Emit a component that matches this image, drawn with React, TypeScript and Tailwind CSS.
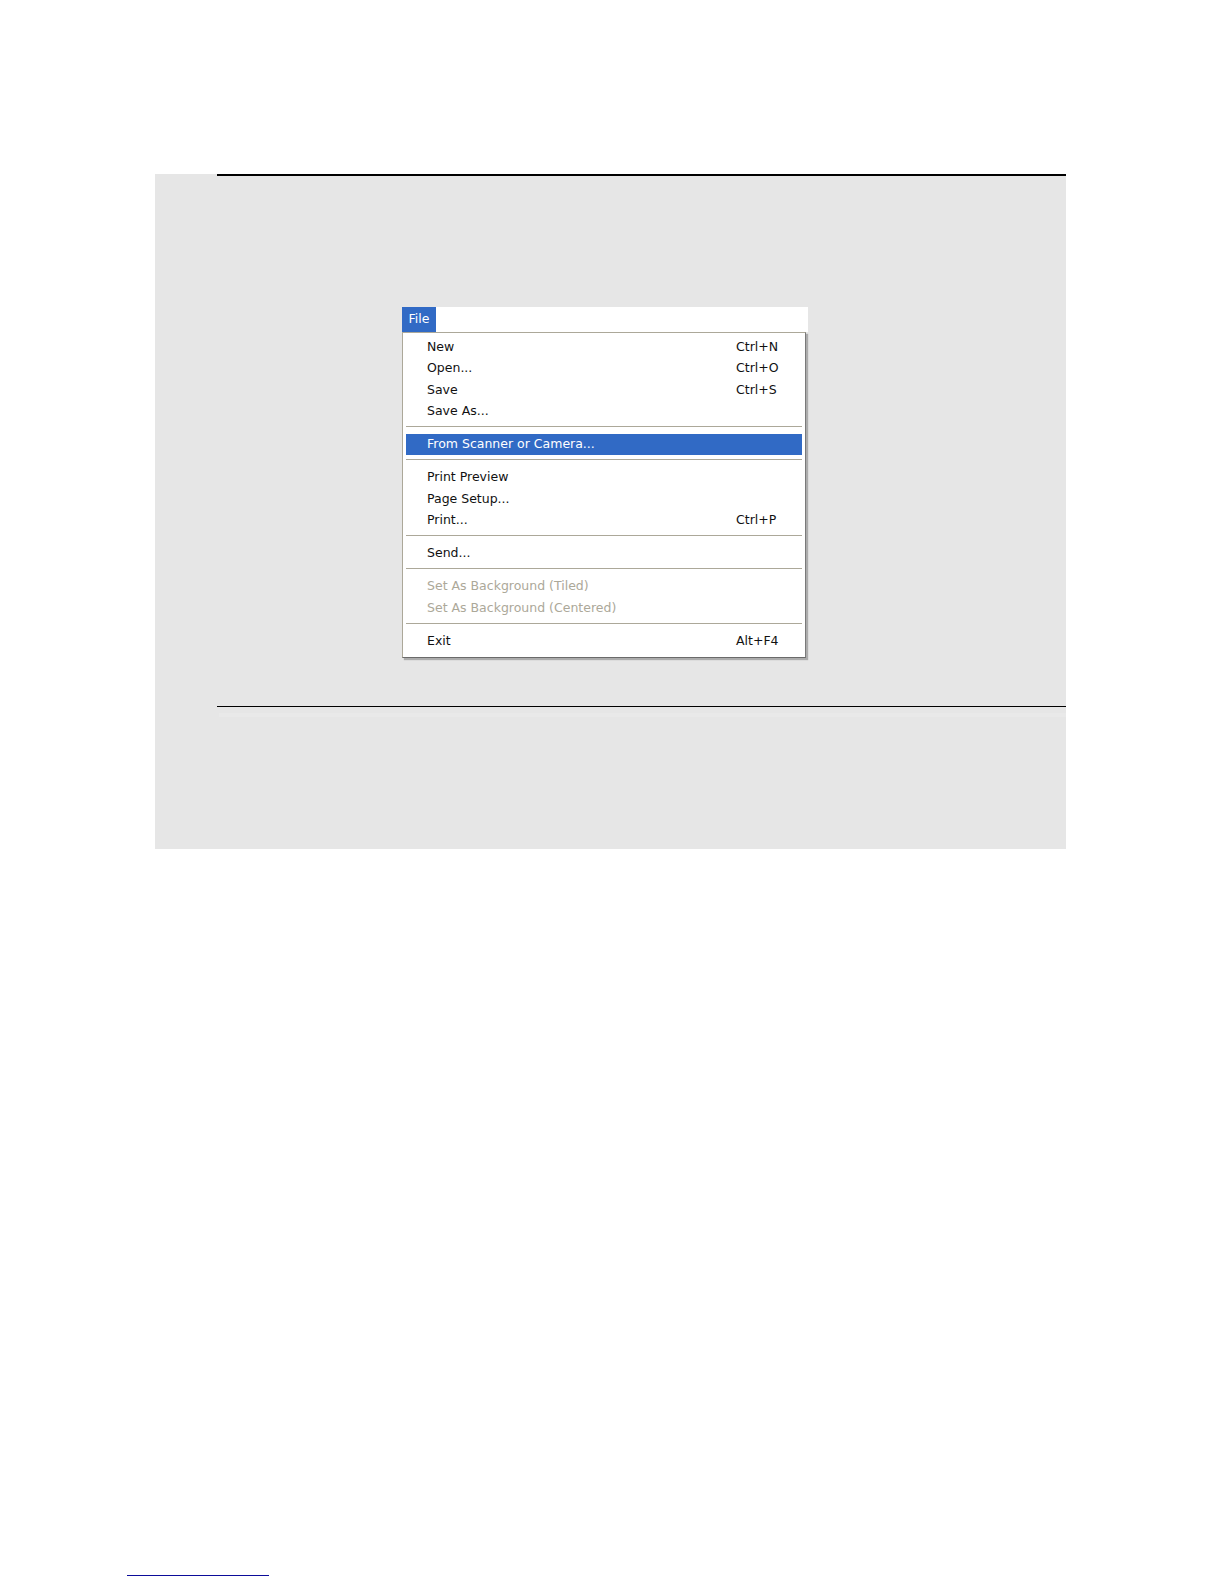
import React from 'react';

type Row =
  | { kind: 'item'; label: string; shortcut?: string; disabled?: boolean; active?: boolean }
  | { kind: 'sep' };

const rows: Row[] = [
  { kind: 'item', label: 'New', shortcut: 'Ctrl+N' },
  { kind: 'item', label: 'Open...', shortcut: 'Ctrl+O' },
  { kind: 'item', label: 'Save', shortcut: 'Ctrl+S' },
  { kind: 'item', label: 'Save As...' },
  { kind: 'sep' },
  { kind: 'item', label: 'From Scanner or Camera...', active: true },
  { kind: 'sep' },
  { kind: 'item', label: 'Print Preview' },
  { kind: 'item', label: 'Page Setup...' },
  { kind: 'item', label: 'Print...', shortcut: 'Ctrl+P' },
  { kind: 'sep' },
  { kind: 'item', label: 'Send...' },
  { kind: 'sep' },
  { kind: 'item', label: 'Set As Background (Tiled)', disabled: true },
  { kind: 'item', label: 'Set As Background (Centered)', disabled: true },
  { kind: 'sep' },
  { kind: 'item', label: 'Exit', shortcut: 'Alt+F4' },
];

const FileMenu: React.FC = () => {
  return (
    <div className="w-[406px] font-['DejaVu_Sans',sans-serif] text-[12.5px] leading-none">
      {/* menu bar */}
      <div className="h-[25px] bg-white flex">
        <div className="w-[34px] h-full bg-[#316ac5] text-white flex items-center justify-center">File</div>
      </div>
      {/* dropdown */}
      <div className="w-[404px] bg-white border border-[#aca899] border-r-[#7a7a7a] border-b-[#6a6a6a] shadow-[2px_2px_1px_rgba(0,0,0,0.25)] px-[3px] pt-[3px] pb-[5px]">
        {rows.map((r, i) =>
          r.kind === 'sep' ? (
            <div key={i} className="h-[11.5px] pt-[4px]">
              <div className="h-px bg-[#aca899]" />
              <div className="h-px bg-white" />
            </div>
          ) : (
            <div
              key={i}
              className={`h-[21.5px] flex items-center pl-[21px] ${
                r.active ? 'bg-[#316ac5] text-white' : r.disabled ? 'text-[#aca899]' : 'text-[#111]'
              }`}
            >
              <span className="w-[309px]">{r.label}</span>
              {r.shortcut && <span>{r.shortcut}</span>}
            </div>
          )
        )}
      </div>
    </div>
  );
};

const App: React.FC = () => {
  return (
    <div className="min-h-[1584px] w-full bg-white pt-[174px] flex flex-col">
      <div className="ml-[155px] w-[911px] h-[675px] bg-[#e6e6e6] flex flex-col">
        <div className="ml-[62px] h-[2px] bg-black" />
        <div className="ml-[247px] mt-[131px]">
          <FileMenu />
        </div>
        <div className="ml-[62px] mt-[48px] h-px bg-black" />
        <div className="ml-[64px] mt-[6px] h-[4px] bg-[#e9e9e9]" />
      </div>
      <div className="ml-[127px] mt-[726px] w-[142px] h-px bg-[#0c0c9a]" />
    </div>
  );
};

export default App;
